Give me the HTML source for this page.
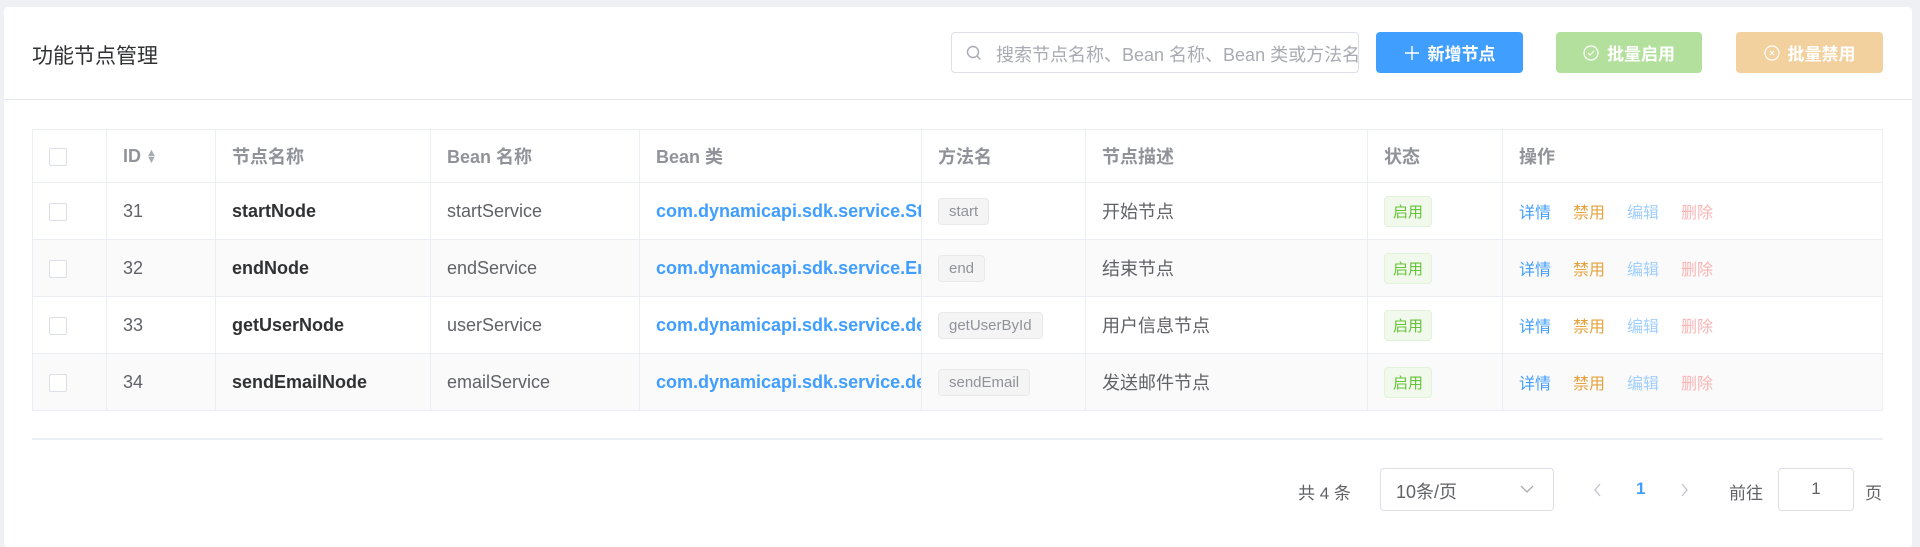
<!DOCTYPE html>
<html><head><meta charset="utf-8"><style>
*{box-sizing:border-box;margin:0;padding:0}
body{width:1920px;height:539px;background:#eef0f4;font-family:"Liberation Sans","Noto Sans CJK SC",sans-serif;overflow:hidden;position:relative;color:#606266}
.card{position:absolute;left:4px;top:7px;width:1908px;height:540px;background:#fff;border-radius:4px}
.abs{position:absolute}
.title{left:32px;top:40px;font-size:21px;color:#303133}
.hdiv{left:4px;top:99px;width:1908px;height:1px;background:#e4e7ed}
.search{left:951px;top:32px;width:408px;height:41px;border:1px solid #dcdfe6;border-radius:4px;font-size:18px;color:#a8abb2;padding:8px 0 0 44px;white-space:nowrap;overflow:hidden}
.btn{top:32px;height:41px;border-radius:4px;color:#fff;font-size:17px;font-weight:bold;display:flex;align-items:center;justify-content:center;gap:8px}
table{position:absolute;left:32px;top:129px;width:1851px;border-collapse:collapse;table-layout:fixed;font-size:18px}
td,th{border:1px solid #ebeef5;text-align:left;padding-left:16px;white-space:nowrap;overflow:hidden}
th{height:53px;color:#909399;font-weight:bold}
td{height:57px}
tr.s td{background:#fafafa}
.cb{display:inline-block;width:18px;height:18px;border:1px solid #dcdfe6;border-radius:2px;background:#fff;vertical-align:middle}
.b{color:#303133;font-weight:bold}
.lk{color:#409eff;font-weight:bold}
.tag{display:inline-block;font-size:15px;color:#909399;background:#f4f4f5;border:1px solid #e9e9eb;border-radius:4px;padding:4px 10px}
.gt{display:inline-block;font-size:15px;color:#67c23a;background:#f0f9eb;border:1px solid #e1f3d8;border-radius:4px;padding:4px 8px}
.ac{font-size:16px;margin-right:22px}
</style></head><body>
<div class="card"></div>
<div class="abs title">功能节点管理</div>
<div class="abs hdiv"></div>
<div class="abs search">搜索节点名称、Bean 名称、Bean 类或方法名</div>
<svg class="abs" style="left:966px;top:45px" width="16" height="16" viewBox="0 0 16 16"><circle cx="7" cy="7" r="5.5" fill="none" stroke="#a8abb2" stroke-width="1.4"/><path d="M11 11l3.5 3.5" stroke="#a8abb2" stroke-width="1.4"/></svg>
<div class="abs btn" style="left:1376px;width:147px;background:#409eff"><svg width="16" height="16" viewBox="0 0 16 16"><path d="M8 1v14M1 8h14" stroke="#fff" stroke-width="1.4"/></svg>新增节点</div>
<div class="abs btn" style="left:1556px;width:146px;background:#b3e19d"><svg width="16" height="16" viewBox="0 0 16 16"><circle cx="8" cy="8" r="7" fill="none" stroke="#fff" stroke-width="1.2"/><path d="M5 8l2 2 4-4" fill="none" stroke="#fff" stroke-width="1.2"/></svg>批量启用</div>
<div class="abs btn" style="left:1736px;width:147px;background:#f3d19e"><svg width="16" height="16" viewBox="0 0 16 16"><circle cx="8" cy="8" r="7" fill="none" stroke="#fff" stroke-width="1.2"/><path d="M6 6l4 4M10 6l-4 4" stroke="#fff" stroke-width="1.2"/></svg>批量禁用</div>
<table>
<colgroup><col style="width:74px"><col style="width:109px"><col style="width:215px"><col style="width:209px"><col style="width:282px"><col style="width:164px"><col style="width:282px"><col style="width:135px"><col></colgroup>
<tr><th><span class="cb"></span></th><th>ID <span style="font-size:11px;color:#a8abb2;display:inline-block;line-height:7px;vertical-align:middle">▲<br>▼</span></th><th>节点名称</th><th>Bean 名称</th><th>Bean 类</th><th>方法名</th><th>节点描述</th><th>状态</th><th>操作</th></tr>
<tr><td><span class="cb"></span></td><td>31</td><td class="b">startNode</td><td>startService</td><td class="lk">com.dynamicapi.sdk.service.StartService</td><td><span class="tag">start</span></td><td>开始节点</td><td><span class="gt">启用</span></td><td><span class="ac" style="color:#409eff">详情</span><span class="ac" style="color:#e6a23c">禁用</span><span class="ac" style="color:#a0cfff">编辑</span><span class="ac" style="color:#fab6b6">删除</span></td></tr>
<tr class="s"><td><span class="cb"></span></td><td>32</td><td class="b">endNode</td><td>endService</td><td class="lk">com.dynamicapi.sdk.service.EndService</td><td><span class="tag">end</span></td><td>结束节点</td><td><span class="gt">启用</span></td><td><span class="ac" style="color:#409eff">详情</span><span class="ac" style="color:#e6a23c">禁用</span><span class="ac" style="color:#a0cfff">编辑</span><span class="ac" style="color:#fab6b6">删除</span></td></tr>
<tr><td><span class="cb"></span></td><td>33</td><td class="b">getUserNode</td><td>userService</td><td class="lk">com.dynamicapi.sdk.service.demo</td><td><span class="tag">getUserById</span></td><td>用户信息节点</td><td><span class="gt">启用</span></td><td><span class="ac" style="color:#409eff">详情</span><span class="ac" style="color:#e6a23c">禁用</span><span class="ac" style="color:#a0cfff">编辑</span><span class="ac" style="color:#fab6b6">删除</span></td></tr>
<tr class="s"><td><span class="cb"></span></td><td>34</td><td class="b">sendEmailNode</td><td>emailService</td><td class="lk">com.dynamicapi.sdk.service.demo</td><td><span class="tag">sendEmail</span></td><td>发送邮件节点</td><td><span class="gt">启用</span></td><td><span class="ac" style="color:#409eff">详情</span><span class="ac" style="color:#e6a23c">禁用</span><span class="ac" style="color:#a0cfff">编辑</span><span class="ac" style="color:#fab6b6">删除</span></td></tr>
</table>
<div class="abs" style="left:32px;top:438px;width:1851px;height:2px;background:#ebeef5"></div>
<div class="abs" style="left:1298px;top:479px;font-size:17px;color:#606266">共 4 条</div>
<div class="abs" style="left:1380px;top:468px;width:174px;height:43px;border:1px solid #dcdfe6;border-radius:4px;font-size:18px;padding:9px 0 0 15px;color:#606266">10条/页</div>
<svg class="abs" style="left:1520px;top:484px" width="14" height="10" viewBox="0 0 14 10"><path d="M1 2l6 6 6-6" fill="none" stroke="#a8abb2" stroke-width="1.3"/></svg>
<svg class="abs" style="left:1592px;top:482px" width="10" height="16" viewBox="0 0 10 16"><path d="M8 2L3 8l5 6" fill="none" stroke="#c0c4cc" stroke-width="1.3"/></svg>
<div class="abs" style="left:1636px;top:479px;font-size:17px;font-weight:bold;color:#409eff">1</div>
<svg class="abs" style="left:1680px;top:482px" width="10" height="16" viewBox="0 0 10 16"><path d="M2 2l5 6-5 6" fill="none" stroke="#c0c4cc" stroke-width="1.3"/></svg>
<div class="abs" style="left:1729px;top:479px;font-size:17px;color:#606266">前往</div>
<div class="abs" style="left:1778px;top:468px;width:76px;height:43px;border:1px solid #dcdfe6;border-radius:4px;font-size:17px;text-align:center;padding-top:10px">1</div>
<div class="abs" style="left:1865px;top:479px;font-size:17px;color:#606266">页</div>
</body></html>
